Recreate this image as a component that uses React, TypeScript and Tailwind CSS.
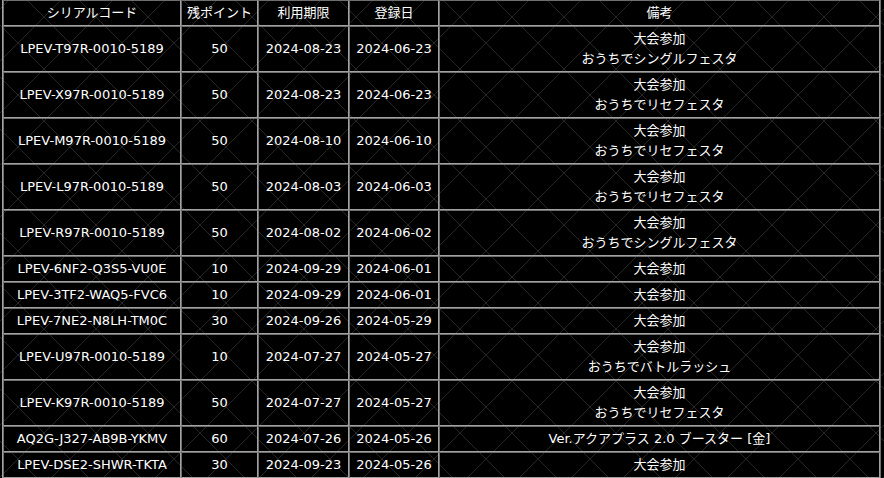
type Serial = {
  code: string;
  points: number;
  expires: string;
  registered: string;
  notes: string[];
};

const serials: Serial[] = [
  { code: "LPEV-T97R-0010-5189", points: 50, expires: "2024-08-23", registered: "2024-06-23", notes: ["大会参加", "おうちでシングルフェスタ"] },
  { code: "LPEV-X97R-0010-5189", points: 50, expires: "2024-08-23", registered: "2024-06-23", notes: ["大会参加", "おうちでリセフェスタ"] },
  { code: "LPEV-M97R-0010-5189", points: 50, expires: "2024-08-10", registered: "2024-06-10", notes: ["大会参加", "おうちでリセフェスタ"] },
  { code: "LPEV-L97R-0010-5189", points: 50, expires: "2024-08-03", registered: "2024-06-03", notes: ["大会参加", "おうちでリセフェスタ"] },
  { code: "LPEV-R97R-0010-5189", points: 50, expires: "2024-08-02", registered: "2024-06-02", notes: ["大会参加", "おうちでシングルフェスタ"] },
  { code: "LPEV-6NF2-Q3S5-VU0E", points: 10, expires: "2024-09-29", registered: "2024-06-01", notes: ["大会参加"] },
  { code: "LPEV-3TF2-WAQ5-FVC6", points: 10, expires: "2024-09-29", registered: "2024-06-01", notes: ["大会参加"] },
  { code: "LPEV-7NE2-N8LH-TM0C", points: 30, expires: "2024-09-26", registered: "2024-05-29", notes: ["大会参加"] },
  { code: "LPEV-U97R-0010-5189", points: 10, expires: "2024-07-27", registered: "2024-05-27", notes: ["大会参加", "おうちでバトルラッシュ"] },
  { code: "LPEV-K97R-0010-5189", points: 50, expires: "2024-07-27", registered: "2024-05-27", notes: ["大会参加", "おうちでリセフェスタ"] },
  { code: "AQ2G-J327-AB9B-YKMV", points: 60, expires: "2024-07-26", registered: "2024-05-26", notes: ["Ver.アクアプラス 2.0 ブースター [金]"] },
  { code: "LPEV-DSE2-SHWR-TKTA", points: 30, expires: "2024-09-23", registered: "2024-05-26", notes: ["大会参加"] },
];

const cell =
  "border-t border-l border-t-[#6e6e6e] border-l-[#6e6e6e] border-b border-r border-b-[#a2a2a2] border-r-[#a2a2a2] px-1 py-[2px] text-center align-middle font-normal";

export default function App() {
  return (
    <div className="min-h-screen w-full bg-black [background-image:repeating-linear-gradient(45deg,#272727_0,#272727_1px,transparent_1px,transparent_36.77px),repeating-linear-gradient(-45deg,#272727_0,#272727_1px,transparent_1px,transparent_36.77px)] [background-size:52px_52px] [background-position:18px_45px] font-['DejaVu_Sans','Noto_Sans_CJK_JP',sans-serif] text-[13px] leading-[20px] text-white">
      <table className="-mt-[1px] ml-[2px] w-[879px] table-fixed border-separate border-spacing-0 border border-t-[#a2a2a2] border-l-[#a2a2a2] border-b-[#6e6e6e] border-r-[#6e6e6e]">
        <thead>
          <tr>
            <th className={`${cell} w-[178px]`}>シリアルコード</th>
            <th className={`${cell} w-[77px]`}>残ポイント</th>
            <th className={`${cell} w-[91px]`}>利用期限</th>
            <th className={`${cell} w-[90px]`}>登録日</th>
            <th className={cell}>備考</th>
          </tr>
        </thead>
        <tbody>
          {serials.map((s) => (
            <tr key={s.code}>
              <td className={cell}>{s.code}</td>
              <td className={cell}>{s.points}</td>
              <td className={cell}>{s.expires}</td>
              <td className={cell}>{s.registered}</td>
              <td className={cell}>
                {s.notes.map((n) => (
                  <div key={n}>{n}</div>
                ))}
              </td>
            </tr>
          ))}
        </tbody>
      </table>
    </div>
  );
}
